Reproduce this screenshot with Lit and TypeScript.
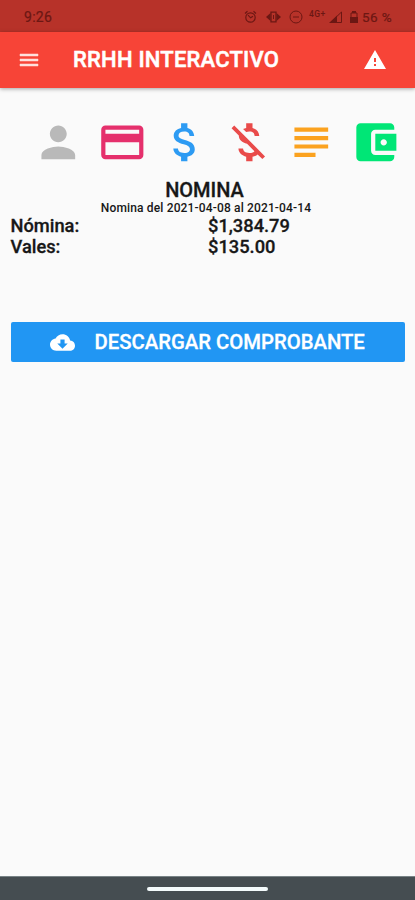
import { LitElement, html, css, svg } from "lit";
import { customElement } from "lit/decorators.js";

const ICONS = {
  person: "M12 12c2.21 0 4-1.79 4-4s-1.79-4-4-4-4 1.79-4 4 1.79 4 4 4zm0 2c-2.67 0-8 1.34-8 4v2h16v-2c0-2.66-5.33-4-8-4z",
  card: "M20 4H4c-1.11 0-1.99.89-1.99 2L2 18c0 1.11.89 2 2 2h16c1.11 0 2-.89 2-2V6c0-1.11-.89-2-2-2zm0 14H4v-6h16v6zm0-10H4V6h16v2z",
  money: "M11.8 10.9c-2.27-.59-3-1.2-3-2.15 0-1.09 1.01-1.85 2.7-1.85 1.78 0 2.44.85 2.5 2.1h2.21c-.07-1.72-1.12-3.3-3.21-3.81V3h-3v2.16c-1.94.42-3.5 1.68-3.5 3.61 0 2.31 1.91 3.46 4.7 4.13 2.5.6 3 1.48 3 2.41 0 .69-.49 1.79-2.7 1.79-2.06 0-2.87-.92-2.98-2.1h-2.2c.12 2.19 1.76 3.42 3.68 3.83V21h3v-2.15c1.95-.37 3.5-1.5 3.5-3.55 0-2.84-2.43-3.81-4.7-4.4z",
  moneyOff: "M12.5 6.9c1.78 0 2.44.85 2.5 2.1h2.21c-.07-1.72-1.12-3.3-3.21-3.81V3h-3v2.16c-.53.12-1.03.3-1.48.54l1.47 1.47c.41-.17.91-.27 1.51-.27zM5.33 4.06L4.06 5.33 7.5 8.77c0 2.08 1.56 3.21 3.91 3.91l3.51 3.51c-.34.48-1.05.91-2.42.91-2.06 0-2.87-.92-2.98-2.1h-2.2c.12 2.19 1.76 3.42 3.68 3.83V21h3v-2.15c.96-.18 1.82-.55 2.45-1.12l2.22 2.22 1.27-1.27L5.33 4.06z",
  subject: "M14 17H4v2h10v-2zm6-8H4v2h16V9zM4 15h16v-2H4v2zM4 5v2h16V5H4z",
  wallet: "M21 18v1c0 1.1-.9 2-2 2H5c-1.11 0-2-.9-2-2V5c0-1.1.89-2 2-2h14c1.1 0 2 .9 2 2v1h-9c-1.11 0-2 .9-2 2v8c0 1.1.89 2 2 2h9zm-9-2h10V8H12v8zm4-2.5c-.83 0-1.5-.67-1.5-1.5s.67-1.5 1.5-1.5 1.5.67 1.5 1.5-.67 1.5-1.5 1.5z",
  menu: "M3 18h18v-2H3v2zm0-5h18v-2H3v2zm0-7v2h18V6H3z",
  warning: "M1 21h22L12 2 1 21zm12-3h-2v-2h2v2zm0-4h-2v-4h2v4z",
  cloud: "M19.35 10.04C18.67 6.59 15.64 4 12 4 9.11 4 6.6 5.64 5.35 8.04 2.34 8.36 0 10.91 0 14c0 3.31 2.69 6 6 6h13c2.76 0 5-2.24 5-5 0-2.64-2.05-4.78-4.65-4.96zM17 13l-5 5-5-5h3V9h4v4h3z",
};

const icon = (name: keyof typeof ICONS, cls: string) =>
  html`<svg class="icon ${cls}" viewBox="0 0 24 24"><path d=${ICONS[name]}></path></svg>`;

@customElement("status-bar")
export class StatusBar extends LitElement {
  static styles = css`
    :host {
      display: flex;
      align-items: center;
      height: 32px;
      box-sizing: border-box;
      padding: 1px 0 0 24px;
      background: #b73229;
      color: #6c1713;
      font-size: 14px;
    }
    .time { width: 220px; letter-spacing: 0.3px; -webkit-text-stroke: 0.2px; }
    svg { display: block; fill: none; stroke: currentColor; flex: none; }
    .solid { fill: currentColor; stroke: none; }
    .alarm { width: 13px; height: 14px; stroke-width: 1.2; }
    .vibrate { width: 15px; height: 12px; margin-left: 9px; }
    .dnd { width: 14px; height: 14px; margin-left: 8px; }
    .net { font-size: 8.5px; line-height: 10px; font-weight: 500; margin: 0 0 6px 6px; width: 18px; letter-spacing: 0.4px; }
    .signal { width: 13px; height: 12px; margin-left: 2px; }
    .battery { width: 8px; height: 12px; margin-left: 8px; }
    .level { margin-left: 4px; font-size: 13.5px; white-space: nowrap; letter-spacing: 0.4px; -webkit-text-stroke: 0.2px; }
  `;
  render() {
    return html`
      <span class="time">9:26</span>
      <svg class="alarm" viewBox="0 0 13 14">${svg`<circle cx="6.5" cy="7.5" r="4.7"/><path d="M1 3.5 3.5 1.3M12 3.5 9.5 1.3M4 5.2l2.6 2.6L9 6.2"/>`}</svg>
      <svg class="vibrate" viewBox="0 0 15 12">${svg`<path d="M5 1.2h5v9.6H5z" stroke-width="1.3"/><path class="solid" d="M4.500 2v8L0 6zM10.500 2v8L15 6z"/><path d="M7.500 4v4"/>`}</svg>
      <svg class="dnd" viewBox="0 0 14 14">${svg`<circle cx="7" cy="7" r="6"/><path d="M4 7h6"/>`}</svg>
      <span class="net">4G+</span>
      <svg class="signal" viewBox="0 0 13 12">${svg`<path d="M1.5 11.5h11v-10.500z"/><path class="solid" d="M0 12h8V4.500z"/>`}</svg>
      <svg class="battery" viewBox="0 0 8 12">${svg`<path d="M1 2h6v9.500H1z"/><path class="solid" d="M2 0h4v2H2zM0 6h8v6H0z"/>`}</svg>
      <span class="level">56 %</span>
    `;
  }
}

@customElement("app-root")
export class AppRoot extends LitElement {
  static styles = css`
    :host {
      display: flex;
      flex-direction: column;
      height: 900px;
      overflow: hidden;
      background: #fafafa;
      color: #171717;
      font-family: Roboto, "Liberation Sans", sans-serif;
    }
    .icon { display: block; flex: none; fill: currentColor; }
    .appbar {
      display: flex;
      align-items: center;
      flex: none;
      height: 56px;
      box-sizing: border-box;
      padding: 0 28px 0 17px;
      background: #f74437;
      color: #fff;
      box-shadow: 0 1px 4px rgba(0, 0, 0, 0.35);
    }
    .small { width: 24px; height: 24px; }
    .menu { color: #ffe0dc; stroke: currentColor; stroke-width: 0.5; }
    .title { margin: 0 auto 0 32px; font-size: 22px; font-weight: 500; line-height: 26px; letter-spacing: 0.2px; white-space: nowrap; -webkit-text-stroke: 0.5px; }
    .tabs {
      display: grid;
      grid-template-columns: repeat(6, 63.27px);
      justify-items: center;
      flex: none;
      padding: 29px 0 0 27px;
      height: 51px;
    }
    .tab { width: 50.6px; height: 50.6px; }
    .grey { color: #b9b9b9; }
    .pink { color: #e5306c; }
    .blue { color: #2d9bf3; }
    .red { color: #e94b4a; }
    .orange { color: #fba21f; }
    .green { color: #00e676; }
    .heading, .amounts, .download { -webkit-text-stroke: 0.3px; }
    .heading { margin: 10px 6px 0 0; text-align: center; font-size: 20px; line-height: 24px; font-weight: 500; }
    .period { margin-right: 3px; text-align: center; font-size: 12px; line-height: 12px; height: 13px; font-weight: 500; letter-spacing: 0.15px; }
    .amounts {
      display: grid;
      grid-template-columns: 197.5px auto;
      padding: 0 10.500px;
      font-size: 18.3px;
      line-height: 21px;
      font-weight: 500;
    }
    .download {
      display: flex;
      align-items: center;
      flex: none;
      height: 40px;
      margin: 65px 10px 0 11px;
      padding: 0 0 0 38.500px;
      border: 0;
      border-radius: 2px;
      background: #2196f3;
      color: #fff;
      font: 500 20.3px/40px Roboto, "Liberation Sans", sans-serif;
      white-space: nowrap;
    }
    .cloud { width: 25px; height: 25px; }
    .label { margin-left: 20px; }
    .navbar {
      display: flex;
      justify-content: center;
      flex: none;
      height: 24px;
      box-sizing: border-box;
      margin-top: auto;
      padding-top: 9.500px;
      background: #454d51;
      border-top: 1px solid #788386;
    }
    .handle { width: 121px; height: 4px; border-radius: 2px; background: #f4fbfc; }
  `;
  render() {
    return html`
      <status-bar></status-bar>
      <header class="appbar">
        ${icon("menu", "small menu")}
        <span class="title">RRHH INTERACTIVO</span>
        ${icon("warning", "small")}
      </header>
      <nav class="tabs">
        ${icon("person", "tab grey")} ${icon("card", "tab pink")} ${icon("money", "tab blue")}
        ${icon("moneyOff", "tab red")} ${icon("subject", "tab orange")} ${icon("wallet", "tab green")}
      </nav>
      <div class="heading">NOMINA</div>
      <div class="period">Nomina del 2021-04-08 al 2021-04-14</div>
      <div class="amounts">
        <span>Nómina:</span><span>$1,384.79</span>
        <span>Vales:</span><span>$135.00</span>
      </div>
      <button class="download">${icon("cloud", "cloud")}<span class="label">DESCARGAR COMPROBANTE</span></button>
      <footer class="navbar"><div class="handle"></div></footer>
    `;
  }
}
